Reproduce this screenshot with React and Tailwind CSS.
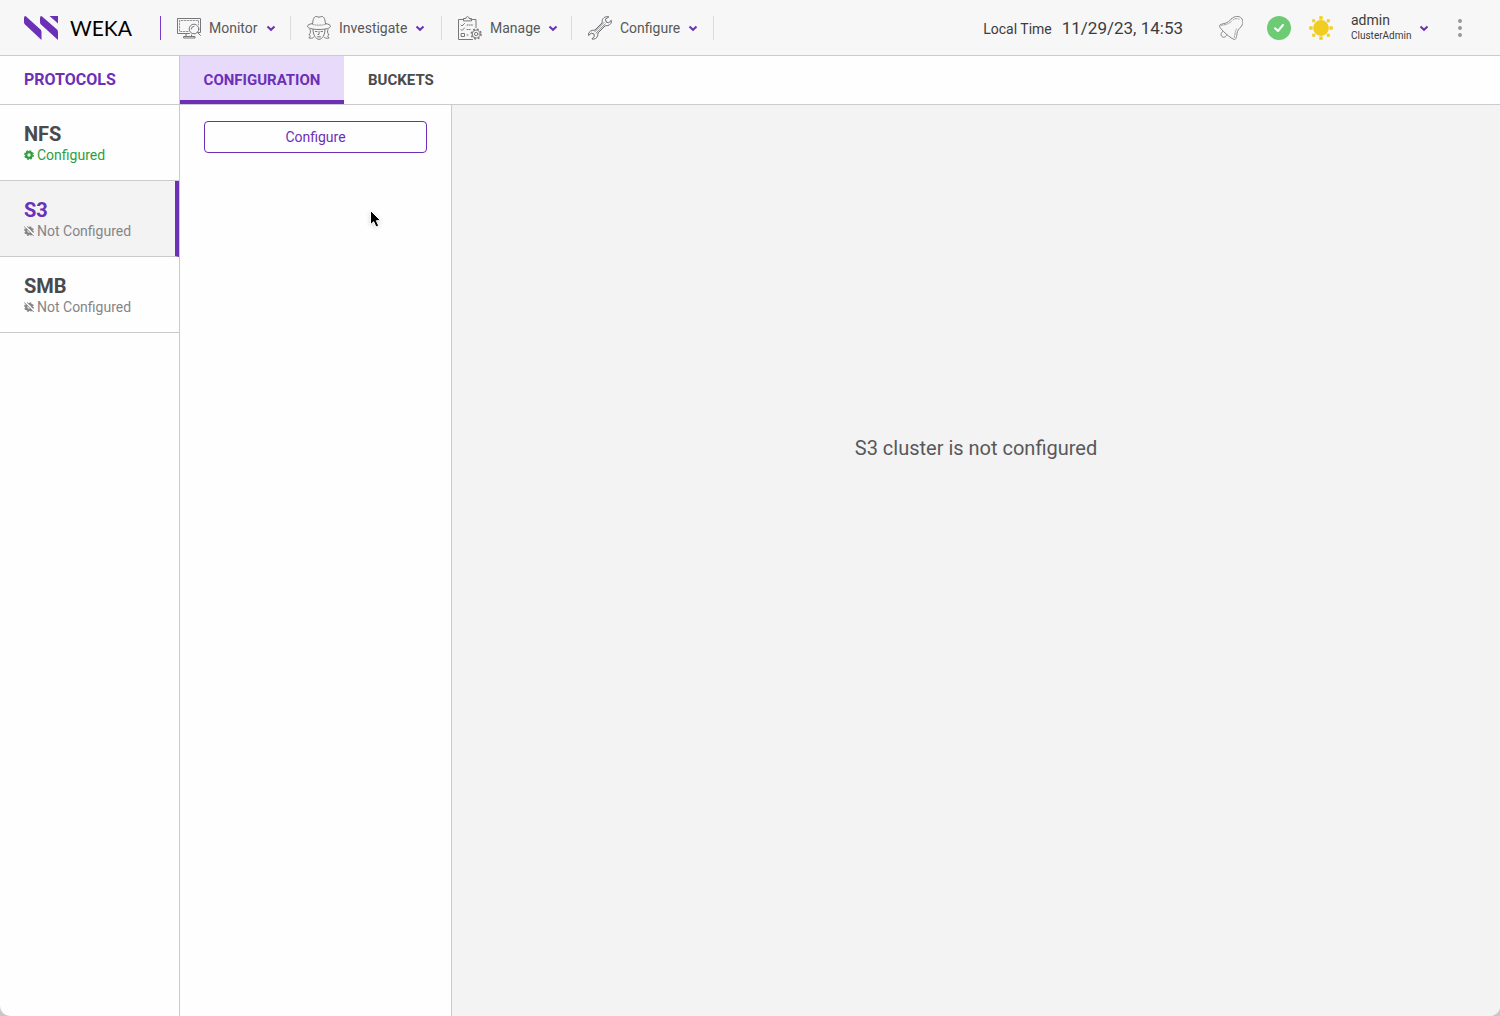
const line = {
  fill: 'none',
  stroke: 'currentColor',
  strokeLinecap: 'round',
  strokeLinejoin: 'round',
};

function MonitorIcon() {
  return (
    <svg viewBox="0 0 24 24" className="size-6 shrink-0 text-[#77777b]" {...line} strokeWidth="1" aria-hidden="true">
      <path d="M12.500 17.500H.5V2.500h23v14h-2" />
      <path d="M11 15.500H2.500V4.500h19v4" strokeDasharray="1.500 1.500" strokeWidth=".8" />
      <circle cx="17" cy="13" r="4.800" />
      <path d="M14.300 13a2.800 2.800 0 0 1 2.700-2.700M20.500 16.500l3 3M9 17.500v3M14.500 19v1.500M7 20.500h11v1.500H7z" />
    </svg>
  );
}

function InvestigateIcon() {
  return (
    <svg viewBox="0 0 24 24" className="size-6 shrink-0 text-[#77777b]" {...line} strokeWidth="1" aria-hidden="true">
      <path d="M5.500 8C6 3 7 .5 9.200.5c1.200 0 1.800.7 2.800.7s1.600-.7 2.800-.7C17 .5 18 3 18.500 8" />
      <path d="M5.500 7.500C2.500 8 .5 9 .5 10.300c0 1.700 4.500 3.200 11.500 3.200s11.500-1.500 11.500-3.200c0-1.300-2-2.300-5-2.800" />
      <path d="M6 8.500c3.500.9 8.500.9 12 0" strokeDasharray="1 1.200" strokeWidth=".8" />
      <path d="M6 13.500c0 5 2.500 9.800 6 9.800s6-4.800 6-9.800M12 15.500v3h-1M8.500 15.500h1.500M14 15.500h1.500M10.500 20.800h3" />
      <path d="M3 13.500c1 2 .5 3.500-1 5.500 1.500 0 1.800 2-.2 2.800 2 .7 3.700.7 4.700-.3M21 13.500c-1 2-.5 3.500 1 5.500-1.500 0-1.800 2 .2 2.800-2 .7-3.700.7-4.700-.3" />
    </svg>
  );
}

function ManageIcon() {
  return (
    <svg viewBox="0 0 24 24" className="size-6 shrink-0 text-[#77777b]" {...line} strokeWidth="1" aria-hidden="true">
      <path d="M5.500 3.500h-5v20h14M13 3.500h5v8M5.500 4.500v-2H8c0-2.600 3-2.600 3 0h2.500v2z" />
      <path d="M3 9l1 1 2.500-2.500M3 13.500l1 1 2.500-2.500M3.500 17.500h3v3h-3z" />
      <path d="M9 9h6.500M9 13.500h4M9 19h2" strokeDasharray="1 1.200" />
      <circle cx="18.200" cy="18" r="4" />
      <circle cx="18.200" cy="18" r="1.700" />
      <circle cx="18.200" cy="18" r="5" strokeDasharray="2 1.930" strokeWidth="1.300" strokeLinecap="butt" />
    </svg>
  );
}

function WrenchIcon() {
  return (
    <svg viewBox="0 0 24 24" className="size-6 shrink-0 text-[#6b6b6f]" {...line} strokeWidth="1" aria-hidden="true">
      <path d="M20.500.8c-2.500-.8-5.700.8-6.200 3.500-.2 1.200 0 2-.3 2.600L7 14c-.7.4-1.600.2-2.800.4C1.600 14.900 0 17.500.6 19.500l2.600-2.300 2.600.6.600 2.500-2.500 2.700c2.300.7 5.200-.8 5.800-3.300.3-1.200 0-2.100.4-2.800l7-7c.7-.4 1.600-.1 2.800-.4 2.500-.6 4-3 3.400-5.200l-2.600 2.400-2.500-.6-.7-2.600z" />
      <path d="M16 6.500L6.800 15.800M17.300 8L8 17.200" strokeWidth=".8" />
    </svg>
  );
}

function BellIcon() {
  return (
    <svg viewBox="0 0 24 24" className="size-6" {...line} stroke="#88888c" strokeWidth="1" aria-hidden="true">
      <path d="M12.500 2.800C15.500-.2 20-.3 22.300 2c2.300 2.400 1.900 6.500-.5 9-2 2-3.300 3.500-3.800 6.500-.3 2.500-.8 6-2.500 6C13 23.500.5 13 .5 10c0-1.700 3-2 5.500-2.700 2.800-.8 4.500-2.500 6.500-4.500z" />
      <path d="M2.500 9.300c4-.5 7.500-1.500 10-4M15.300 21.500c.8-3 .7-6 2.200-8.500M14 4c1.500-1.400 4-2 6-.7" strokeDasharray="1.500 1.200" strokeWidth=".8" />
      <path d="M3.800 15.500c-1.800 1-2.300 3-1.300 4.500 1.300 1.900 4 1.700 5.300-.9" />
    </svg>
  );
}

function SunIcon() {
  return (
    <svg viewBox="0 0 24 24" className="size-6" fill="#f2cd21" aria-hidden="true">
      <circle cx="12" cy="12" r="7.900" />
      {[0, 90, 180, 270].map((a) => (
        <rect key={a} x="10.300" y=".2" width="3.400" height="3.400" transform={`rotate(${a} 12 12)`} />
      ))}
      <path d="M3.200 3.200h3v3h-3zM17.800 3.200h3v3h-3zM3.200 17.800h3v3h-3zM17.800 17.800h3v3h-3z" />
    </svg>
  );
}

function Chevron() {
  return (
    <svg viewBox="0 0 10 10" className="size-[10px] shrink-0" fill="none" stroke="#6b30b5" strokeWidth="2" aria-hidden="true">
      <path d="M1.500 3.500L5 6.800l3.500-3.300" />
    </svg>
  );
}

function GearIcon({ off }) {
  return (
    <svg viewBox="0 0 10 10" className="size-[10px] shrink-0" fill="none" stroke="currentColor" aria-hidden="true">
      <circle cx="5" cy="5" r="2.800" strokeWidth="2.200" />
      <circle cx="5" cy="5" r="4.200" strokeWidth="1.400" strokeDasharray="1.800 1.499" />
      {off && (
        <>
          <path d="M1 0L10 9" stroke="white" strokeWidth="1.600" />
          <path d="M0 .3L9.700 10" strokeWidth="1" />
        </>
      )}
    </svg>
  );
}

const menus = [
  { label: 'Monitor', Icon: MonitorIcon, width: 'w-[130px]' },
  { label: 'Investigate', Icon: InvestigateIcon, width: 'w-[151px]' },
  { label: 'Manage', Icon: ManageIcon, width: 'w-[130px]' },
  { label: 'Configure', Icon: WrenchIcon, width: 'w-[142px]' },
];

const protocols = [
  { name: 'NFS', configured: true },
  { name: 'S3', configured: false, active: true },
  { name: 'SMB', configured: false },
];

function Header() {
  return (
    <header className="flex h-14 shrink-0 items-center border-b border-[#cbcbcf] bg-[#f7f7f7]">
      <a href="#home" className="flex w-40 shrink-0 items-center gap-3 pl-6">
        <svg viewBox="0 0 34 24" className="h-6 w-[34px]" fill="#6b30b5" aria-hidden="true">
          <path d="M1.500 0L16.500 13.500q1 1 1 2.500v8L1 8.500Q0 7.500 0 6V1.500Q0 0 1.500 0z" />
          <path d="M17.500 0L33 13.500q1 1 1 2.500v8L17 8.500Q16 7.500 16 6V1.500Q16 0 17.500 0z" />
          <path d="M25.500 0H34v7.500z" />
        </svg>
        <span className="font-['Lato',sans-serif] text-[21px] leading-6 text-black">WEKA</span>
      </a>
      <nav className="flex items-center border-l border-[#7c3bd0]">
        {menus.map(({ label, Icon, width }) => (
          <button
            key={label}
            type="button"
            className={`flex h-6 items-center gap-2 border-r border-[#dcdce0] pl-4 text-left text-sm ${width}`}
          >
            <Icon />
            <span className="grow">{label}</span>
            <span className="pr-4"><Chevron /></span>
          </button>
        ))}
      </nav>
      <div className="ml-auto flex shrink-0 items-center">
        <div className="flex items-baseline gap-[10px] whitespace-nowrap text-[#3c3c3e]">
          <span className="text-sm">Local Time</span>
          <time className="text-[17px] leading-6">11/29/23, 14:53</time>
        </div>
        <button type="button" aria-label="Alerts" className="ml-9"><BellIcon /></button>
        <button type="button" aria-label="Cluster status" className="ml-6">
          <svg viewBox="0 0 24 24" className="size-6" aria-hidden="true">
            <circle cx="12" cy="12" r="12" fill="#6dcb74" />
            <path d="M8 12.200l3 2.800 5-6" fill="none" stroke="white" strokeWidth="2" strokeLinecap="round" strokeLinejoin="round" />
          </svg>
        </button>
        <button type="button" aria-label="Theme" className="ml-[18px]"><SunIcon /></button>
        <button type="button" className="ml-[18px] flex items-center gap-[7px] text-left text-[#3c3c3e]">
          <span className="flex w-[61px] flex-col">
            <span className="text-sm leading-4">admin</span>
            <span className="text-[10px] leading-4">ClusterAdmin</span>
          </span>
          <Chevron />
        </button>
        <button type="button" aria-label="More" className="mr-7 ml-[19px] flex w-6 flex-col items-center gap-[3px]">
          <span className="size-1 rounded-full bg-[#98989c]" />
          <span className="size-1 rounded-full bg-[#98989c]" />
          <span className="size-1 rounded-full bg-[#98989c]" />
        </button>
      </div>
    </header>
  );
}

function Sidebar() {
  return (
    <aside className="flex w-[180px] shrink-0 flex-col border-r border-[#cbcbcf]">
      <h1 className="flex h-[49px] items-center border-b border-[#cbcbcf] pl-6 text-base font-bold text-[#6b30b5]">
        PROTOCOLS
      </h1>
      {protocols.map(({ name, configured, active }) => (
        <button
          key={name}
          type="button"
          className={`flex h-[76px] flex-col justify-center border-b border-b-[#cbcbcf] pl-6 text-left ${
            active ? 'border-r-4 border-r-[#6b30b5] bg-[#f3f3f3]' : ''
          }`}
        >
          <span className={`text-xl leading-6 font-bold ${active ? 'text-[#6b30b5]' : 'text-[#4a4a4c]'}`}>{name}</span>
          <span
            className={`flex items-center gap-[3px] text-sm leading-[18px] ${
              configured ? 'text-[#2e9e3f]' : 'text-[#858587]'
            }`}
          >
            <GearIcon off={!configured} />
            {configured ? 'Configured' : 'Not Configured'}
          </span>
        </button>
      ))}
    </aside>
  );
}

export default function App() {
  return (
    <div className="min-h-screen bg-[#c8c8c8]">
      <div className="flex min-h-screen flex-col overflow-hidden rounded-b-[10px] bg-[#fefefe] font-['Roboto',sans-serif] text-[#58585a]">
        <Header />
        <div className="flex grow">
          <Sidebar />
          <div className="flex grow flex-col">
            <div role="tablist" className="flex h-[49px] border-b border-[#cbcbcf] text-[15px] font-bold">
              <button
                type="button"
                role="tab"
                aria-selected="true"
                className="w-[164px] border-b-4 border-[#6b30b5] bg-[#e8dafa] pt-1 text-[#6b30b5]"
              >
                CONFIGURATION
              </button>
              <button type="button" role="tab" aria-selected="false" className="px-6 text-[#4a4a4c]">
                BUCKETS
              </button>
            </div>
            <div className="flex grow">
              <section className="w-[272px] shrink-0 border-r border-[#cbcbcf] px-6 pt-4">
                <button
                  type="button"
                  className="h-8 w-full rounded border border-[#6b30b5] text-sm text-[#6b30b5]"
                >
                  Configure
                </button>
              </section>
              <main className="grow bg-[#f3f3f3] pt-[329px] text-center text-xl">
                <p>S3 cluster is not configured</p>
              </main>
            </div>
          </div>
        </div>
      </div>
      <svg
        viewBox="0 0 14 22"
        className="pointer-events-none absolute top-[209px] left-[369px] h-[22px] w-[14px] drop-shadow-sm"
        aria-hidden="true"
      >
        <path d="M1.500 1.500v14.200l3.200-3 2.300 5.300 2.700-1.200-2.300-5.100h4.300z" fill="black" stroke="white" strokeWidth="1" />
      </svg>
    </div>
  );
}
